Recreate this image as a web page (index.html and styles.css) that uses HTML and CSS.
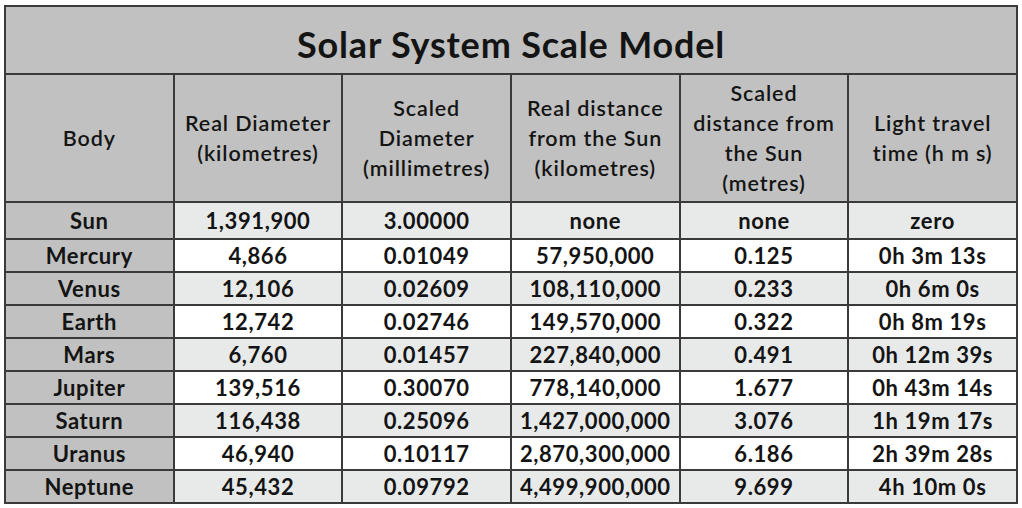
FILE: index.html
```html
<!DOCTYPE html>
<html lang="en">
<head>
<meta charset="utf-8">
<title>Solar System Scale Model</title>
<link rel="stylesheet" href="styles.css">
</head>
<body>
<table class="model">
  <colgroup>
    <col class="c"><col class="c"><col class="c"><col class="c"><col class="c"><col class="c">
  </colgroup>
  <thead>
    <tr class="title-row"><th colspan="6" class="title">Solar System Scale Model</th></tr>
    <tr class="head-row">
      <th>Body</th>
      <th>Real Diameter<br>(kilometres)</th>
      <th>Scaled<br>Diameter<br>(millimetres)</th>
      <th>Real distance<br>from the Sun<br>(kilometres)</th>
      <th>Scaled<br>distance from<br>the Sun<br>(metres)</th>
      <th>Light travel<br>time (h m s)</th>
    </tr>
  </thead>
  <tbody>
    <tr class="sun alt"><th>Sun</th><td>1,391,900</td><td>3.00000</td><td>none</td><td>none</td><td>zero</td></tr>
    <tr><th>Mercury</th><td>4,866</td><td>0.01049</td><td>57,950,000</td><td>0.125</td><td>0h 3m 13s</td></tr>
    <tr class="alt"><th>Venus</th><td>12,106</td><td>0.02609</td><td>108,110,000</td><td>0.233</td><td>0h 6m 0s</td></tr>
    <tr><th>Earth</th><td>12,742</td><td>0.02746</td><td>149,570,000</td><td>0.322</td><td>0h 8m 19s</td></tr>
    <tr class="alt"><th>Mars</th><td>6,760</td><td>0.01457</td><td>227,840,000</td><td>0.491</td><td>0h 12m 39s</td></tr>
    <tr><th>Jupiter</th><td>139,516</td><td>0.30070</td><td>778,140,000</td><td>1.677</td><td>0h 43m 14s</td></tr>
    <tr class="alt"><th>Saturn</th><td>116,438</td><td>0.25096</td><td>1,427,000,000</td><td>3.076</td><td>1h 19m 17s</td></tr>
    <tr><th>Uranus</th><td>46,940</td><td>0.10117</td><td>2,870,300,000</td><td>6.186</td><td>2h 39m 28s</td></tr>
    <tr class="alt"><th>Neptune</th><td>45,432</td><td>0.09792</td><td>4,499,900,000</td><td>9.699</td><td>4h 10m 0s</td></tr>
  </tbody>
</table>
</body>
</html>
```

FILE: styles.css
```css
html, body {
  margin: 0;
  padding: 0;
  background: #ffffff;
}

body {
  padding: 5px 0 0 4px;
  font-family: Lato, "Open Sans", "Liberation Sans", sans-serif;
  color: #141414;
}

.model {
  border-collapse: collapse;
  table-layout: fixed;
  width: 1012px;
  border: 2px solid #3a3a3a;
}

.model .c {
  width: 168.67px;
}

.model th,
.model td {
  border: 2px solid #3a3a3a;
  padding: 0;
  text-align: center;
  vertical-align: middle;
  font-size: 22px;
  font-weight: 700;
  line-height: 24px;
  letter-spacing: 0.6px;
}

.title-row {
  height: 68px;
}

.model .title {
  background: #c0c1c0;
  font-size: 36px;
  font-weight: 700;
  line-height: 40px;
  letter-spacing: 0.8px;
  padding-top: 7px;
}

.head-row {
  height: 128px;
}

.model .head-row th {
  background: #c0c1c0;
  font-weight: 600;
  font-size: 21.5px;
  line-height: 30px;
  letter-spacing: 0.9px;
}

tbody tr {
  height: 33px;
}

tbody tr.sun {
  height: 37px;
}

tbody th {
  background: #c0c1c0;
}

tbody td {
  background: #ffffff;
}

tbody tr.alt td {
  background: #e8eaea;
}
```
